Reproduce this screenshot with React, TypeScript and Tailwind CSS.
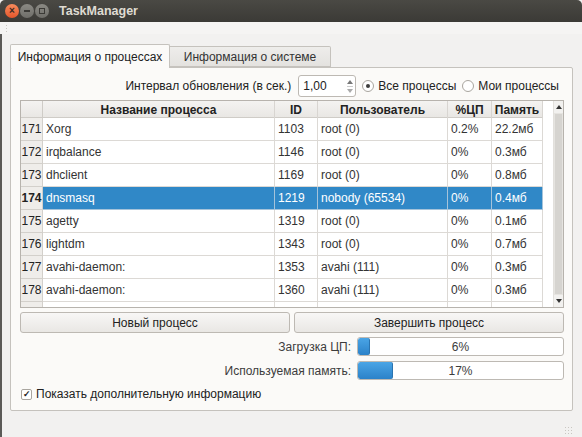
import React from "react";

type Row = { n: number; name: string; id: string; user: string; cpu: string; mem: string; sel?: boolean };

const rows: Row[] = [
  { n: 171, name: "Xorg", id: "1103", user: "root (0)", cpu: "0.2%", mem: "22.2мб" },
  { n: 172, name: "irqbalance", id: "1146", user: "root (0)", cpu: "0%", mem: "0.3мб" },
  { n: 173, name: "dhclient", id: "1169", user: "root (0)", cpu: "0%", mem: "0.8мб" },
  { n: 174, name: "dnsmasq", id: "1219", user: "nobody (65534)", cpu: "0%", mem: "0.4мб", sel: true },
  { n: 175, name: "agetty", id: "1319", user: "root (0)", cpu: "0%", mem: "0.1мб" },
  { n: 176, name: "lightdm", id: "1343", user: "root (0)", cpu: "0%", mem: "0.7мб" },
  { n: 177, name: "avahi-daemon:", id: "1353", user: "avahi (111)", cpu: "0%", mem: "0.3мб" },
  { n: 178, name: "avahi-daemon:", id: "1360", user: "avahi (111)", cpu: "0%", mem: "0.3мб" },
];

function Bar({ label, value }: { label: string; value: number }) {
  return (
    <div className="flex items-center justify-end gap-[6px] h-[19px]">
      <span>{label}</span>
      <div className="relative w-[207px] h-[19px] rounded-[3px] border border-[#bdb9b3] bg-white overflow-hidden">
        <div
          className="h-full rounded-[2px] bg-gradient-to-b from-[#4aa5e6] to-[#2b82c9] border-r border-[#2a74b0]"
          style={{ width: `${Math.round((205 * value) / 100)}px` }}
        />
        <span className="absolute inset-0 flex items-center justify-center">{value}%</span>
      </div>
    </div>
  );
}

export default function App() {
  const cols = "grid grid-cols-[22px_232px_43px_130px_44px_51px_10px]";
  return (
    <div
      className="w-[582px] h-[437px] bg-[#f2f1f0] flex flex-col overflow-hidden text-[12px] text-[#3c3c3c] relative"
      style={{ fontFamily: '"Liberation Sans", Arial, sans-serif' }}
    >
      {/* title bar */}
      <div className="h-[22px] shrink-0 bg-gradient-to-b from-[#4a4944] to-[#3b3a36] rounded-t-[5px] flex items-center">
        <div className="flex items-center gap-[1px] pl-[5px]">
          <div className="w-[14px] h-[14px] rounded-full bg-gradient-to-b from-[#f68b5c] to-[#e5552a] flex items-center justify-center text-[#3a2a22] text-[10px] font-bold leading-none">×</div>
          <div className="w-[14px] h-[14px] rounded-full bg-gradient-to-b from-[#8b8a84] to-[#6f6e69] flex items-center justify-center">
            <div className="w-[6px] h-[2px] bg-[#3b3a36]" />
          </div>
          <div className="w-[14px] h-[14px] rounded-full bg-gradient-to-b from-[#8b8a84] to-[#6f6e69] flex items-center justify-center">
            <div className="w-[6px] h-[6px] border border-[#3b3a36]" />
          </div>
        </div>
        <span className="ml-[10px] text-[#dfdbd2] font-bold text-[12.5px]">TaskManager</span>
      </div>
      {/* toolbar strip */}
      <div className="h-[12px] shrink-0 bg-[#f5f4f3] flex items-center pl-[5px]">
        <div className="w-[3px] h-[9px] bg-[radial-gradient(#c9c6c1_1px,transparent_1px)] bg-[length:3px_3px]" />
      </div>
      {/* body */}
      <div className="flex-1 flex flex-col border-l-[2px] border-[#5b5a57] pl-[8px] pr-[9px]">
        {/* tabs */}
        <div className="flex items-end mt-[9px] h-[24px]">
          <div className="relative z-10 -mb-px h-[24px] w-[160px] bg-[#fbfaf8] border border-b-0 border-[#c5c2bd] rounded-t-[2px] flex items-center justify-center text-[#222]">
            Информация о процессах
          </div>
          <div className="h-[21px] w-[161px] bg-gradient-to-b from-[#eeedeb] to-[#e4e2df] border border-l-0 border-[#c5c2bd] rounded-tr-[2px] flex items-center justify-center text-[#333]">
            Информация о системе
          </div>
        </div>
        {/* panel */}
        <div className="h-[344px] bg-[#fbfaf8] border border-[#c5c2bd] rounded-[2px] flex flex-col pt-[6px] pl-[9px] pr-[8px]">
          {/* interval row */}
          <div className="h-[24px] flex items-center justify-end">
            <span className="text-[#222]">Интервал обновления (в сек.)</span>
            <div className="ml-[7px] w-[58px] h-[22px] bg-white border border-[#bdb9b3] rounded-[3px] flex items-center justify-between pl-[4px] pr-[2px]">
              <span className="text-[#222]">1,00</span>
              <div className="flex flex-col items-center gap-[2px]">
                <div className="w-0 h-0 border-l-[3px] border-r-[3px] border-b-[4px] border-l-transparent border-r-transparent border-b-[#777]" />
                <div className="w-[6px] h-px bg-[#ccc]" />
                <div className="w-0 h-0 border-l-[3px] border-r-[3px] border-t-[4px] border-l-transparent border-r-transparent border-t-[#aaa]" />
              </div>
            </div>
            <div className="flex items-center gap-[4px] ml-[6px]">
              <div className="w-[12px] h-[12px] rounded-full border border-[#a9a59f] bg-white flex items-center justify-center">
                <div className="w-[4px] h-[4px] rounded-full bg-[#3c3c3c]" />
              </div>
              <span className="text-[#222]">Все процессы</span>
            </div>
            <div className="flex items-center gap-[4px] ml-[6px] mr-[5px]">
              <div className="w-[12px] h-[12px] rounded-full border border-[#a9a59f] bg-white" />
              <span className="text-[#222]">Мои процессы</span>
            </div>
          </div>
          {/* table */}
          <div className="mt-[2px] h-[208px] border border-[#b7b3ad] bg-white flex overflow-hidden">
            <div className="w-[532px] flex flex-col overflow-hidden">
              <div className={`${cols} h-[17px] shrink-0 bg-gradient-to-b from-[#f4f3f1] to-[#e9e7e4] border-b border-[#cfccc7] font-bold text-[#222]`}>
                <div className="border-r border-[#cfccc7]" />
                <div className="border-r border-[#d8d5d1] flex items-center justify-center">Название процесса</div>
                <div className="border-r border-[#d8d5d1] flex items-center justify-center">ID</div>
                <div className="border-r border-[#d8d5d1] flex items-center justify-center">Пользователь</div>
                <div className="border-r border-[#d8d5d1] flex items-center justify-center">%ЦП</div>
                <div className="border-r border-[#d8d5d1] flex items-center justify-center">Память</div>
                <div className="bg-white" />
              </div>
              {rows.map((r) => (
                <div key={r.n} className={`${cols} h-[23px] shrink-0`}>
                  <div className={`bg-[#efedea] border-r border-b border-[#d3d0cb] flex items-center justify-center text-[#222] ${r.sel ? "font-bold" : ""}`}>
                    {r.n}
                  </div>
                  {[r.name, r.id, r.user, r.cpu, r.mem].map((c, i) => (
                    <div
                      key={i}
                      className={`border-r border-b flex items-center pl-[3px] ${
                        r.sel ? "bg-[#3088c7] text-white border-[#a5c3da]" : "border-[#dcd9d5] text-[#333]"
                      }`}
                    >
                      {c}
                    </div>
                  ))}
                  <div />
                </div>
              ))}
              <div className={`${cols} h-[6px] shrink-0`}>
                <div className="bg-[#efedea] border-r border-[#d3d0cb]" />
                <div className="border-r border-[#dcd9d5]" />
                <div className="border-r border-[#dcd9d5]" />
                <div className="border-r border-[#dcd9d5]" />
                <div className="border-r border-[#dcd9d5]" />
                <div className="border-r border-[#dcd9d5]" />
                <div />
              </div>
            </div>
            {/* scrollbar */}
            <div className="w-[10px] flex flex-col border-l border-[#e2e0dc]">
              <div className="h-[12px] bg-[#f2f1ef] flex items-center justify-center">
                <div className="w-0 h-0 border-l-[3px] border-r-[3px] border-b-[4px] border-l-transparent border-r-transparent border-b-[#333]" />
              </div>
              <div className="flex-1 bg-[#d6d4d0] border border-[#e6e4e0]" />
              <div className="h-[12px] bg-[#f2f1ef] flex items-center justify-center">
                <div className="w-0 h-0 border-l-[3px] border-r-[3px] border-t-[4px] border-l-transparent border-r-transparent border-t-[#333]" />
              </div>
            </div>
          </div>
          {/* buttons */}
          <div className="mt-[4px] h-[21px] flex gap-[4px]">
            <button className="w-[270px] h-full rounded-[3px] border border-[#bdb9b3] bg-gradient-to-b from-[#f8f7f6] to-[#e9e7e4] text-[#222]">
              Новый процесс
            </button>
            <button className="flex-1 h-full rounded-[3px] border border-[#bdb9b3] bg-gradient-to-b from-[#f8f7f6] to-[#e9e7e4] text-[#222]">
              Завершить процесс
            </button>
          </div>
          <div className="mt-[4px]">
            <Bar label="Загрузка ЦП:" value={6} />
          </div>
          <div className="mt-[5px]">
            <Bar label="Используемая память:" value={17} />
          </div>
          <div className="mt-[6px] h-[16px] flex items-center gap-[4px] pl-[1px]">
            <div className="w-[11px] h-[11px] border border-[#a9a59f] bg-white rounded-[2px] flex items-center justify-center text-[9px] leading-none text-[#222] font-bold">
              ✓
            </div>
            <span className="text-[#222]">Показать дополнительную информацию</span>
          </div>
        </div>
        {/* resize grip */}
        <div className="flex-1 flex items-end justify-end pb-[2px]">
          <div className="w-[9px] h-[9px] bg-[radial-gradient(#c9c6c1_1px,transparent_1px)] bg-[length:3px_3px]" />
        </div>
      </div>
    </div>
  );
}
